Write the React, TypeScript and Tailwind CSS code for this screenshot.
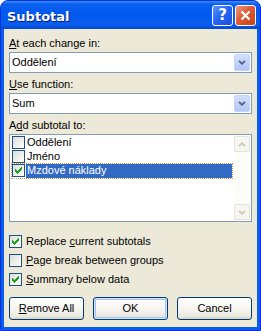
import React from "react";

function Tick() {
  return (
    <svg width="7" height="7" viewBox="0 0 7 7" shapeRendering="crispEdges">
      <path
        d="M6 0h1v1h-1z M5 1h2v1h-2z M0 2h1v1h-1z M4 2h3v1h-3z M0 3h2v1h-2z M3 3h3v1h-3z M0 4h5v1h-5z M1 5h3v1h-3z M2 6h1v1h-1z"
        fill="#21A121"
      />
    </svg>
  );
}

function CheckBox({ checked }: { checked?: boolean }) {
  return (
    <span className="w-[13px] h-[13px] shrink-0 border border-[#1C5180] bg-gradient-to-br from-[#DCDCD7] to-white flex items-center justify-center">
      {checked && <Tick />}
    </span>
  );
}

function Chevron({ color, up }: { color: string; up?: boolean }) {
  return (
    <svg width="8" height="5" viewBox="0 0 8 5">
      <path
        d={up ? "M1 4.2 L4 1.2 L7 4.2" : "M1 0.8 L4 3.8 L7 0.8"}
        stroke={color}
        strokeWidth="1.8"
        fill="none"
      />
    </svg>
  );
}

function Combo({ value }: { value: string }) {
  return (
    <div className="mt-[2px] h-[21px] border border-[#7F9DB9] bg-white flex items-center p-px">
      <span className="flex-1 pl-px">{value}</span>
      <span className="w-[16px] h-full rounded-[2px] border border-[#C3D3FD] bg-gradient-to-b from-[#D4E0FC] to-[#B2C6F4] flex items-center justify-center">
        <Chevron color="#4D6185" />
      </span>
    </div>
  );
}

function Button({ children, isDefault }: { children: React.ReactNode; isDefault?: boolean }) {
  return (
    <div
      className={
        "w-[75px] h-[23px] rounded-[3px] border border-[#003C74] bg-[linear-gradient(180deg,#FFFFFF_0%,#F5F4EF_55%,#EAE8DE_88%,#D6D0C5_100%)] flex items-center justify-center " +
        (isDefault ? "shadow-[inset_0_0_0_1px_#CEE7FF,inset_0_0_0_2px_#A9C0F2]" : "")
      }
    >
      {children}
    </div>
  );
}

const items = [
  { label: "Oddělení", checked: false },
  { label: "Jméno", checked: false },
  { label: "Mzdové náklady", checked: true, selected: true },
];

export default function App() {
  return (
    <div className="w-[261px] h-[331px] flex flex-col rounded-t-[8px] border border-[#0831D9] bg-[#0B5CEA] overflow-hidden font-['Liberation_Sans',Arial,sans-serif] text-[11px] leading-[13px] text-black">
      <div className="h-[28px] shrink-0 flex items-center justify-between pl-[6px] pr-[4px] bg-[linear-gradient(180deg,#3D8FF6_0px,#0A61F0_3px,#0058EE_45%,#0A5DEC_85%,#0447D5_100%)]">
        <span className="pt-[3px] font-['DejaVu_Sans',sans-serif] font-bold text-[13px] leading-[16px] text-white [text-shadow:1px_1px_#0A1883]">
          Subtotal
        </span>
        <div className="flex gap-[2px]">
          <span className="w-[21px] h-[21px] rounded-[3px] border border-white bg-[linear-gradient(135deg,#5B97FB_0%,#2765F3_45%,#1A50DE_100%)] flex items-center justify-center font-['DejaVu_Sans',sans-serif] font-bold text-[15px] leading-none text-white">
            ?
          </span>
          <span className="w-[21px] h-[21px] rounded-[3px] border border-white bg-[linear-gradient(135deg,#EC9A7D_0%,#DE5B35_45%,#C8401A_100%)] flex items-center justify-center">
            <svg width="11" height="11" viewBox="0 0 11 11">
              <path d="M1.5 1.5 L9.5 9.5 M9.5 1.5 L1.5 9.5" stroke="white" strokeWidth="2.2" />
            </svg>
          </span>
        </div>
      </div>

      <div className="flex-1 mx-[3px] mb-[3px] bg-[#ECE9D8] flex flex-col px-[5px] pt-[8px]">
        <div className="h-[13px]">
          <span className="underline underline-offset-[1px]">A</span>t each change in:
        </div>
        <Combo value="Oddělení" />

        <div className="mt-[5px] h-[13px]">
          <span className="underline underline-offset-[1px]">U</span>se function:
        </div>
        <Combo value="Sum" />

        <div className="mt-[5px] h-[13px]">
          A<span className="underline underline-offset-[1px]">d</span>d subtotal to:
        </div>
        <div className="mt-[2px] h-[88px] border border-[#7F9DB9] bg-white flex">
          <div className="flex-1 pt-px px-[2px]">
            {items.map((it) => (
              <div
                key={it.label}
                className={
                  "h-[14px] flex " +
                  (it.selected ? "outline outline-1 outline-dotted outline-[#D09A45]" : "")
                }
              >
                <CheckBox checked={it.checked} />
                <span
                  className={
                    "ml-px flex-1 pl-px " +
                    (it.selected ? "bg-[#316AC5] text-white" : "")
                  }
                >
                  {it.label}
                </span>
              </div>
            ))}
          </div>
          <div className="w-[17px] bg-[#FCFCF9] flex flex-col justify-between py-px pr-px">
            <span className="h-[16px] rounded-[2px] border border-[#E5E3D8] bg-[#F7F6F1] flex items-center justify-center">
              <Chevron color="#CAC8BB" up />
            </span>
            <span className="h-[16px] rounded-[2px] border border-[#E5E3D8] bg-[#F7F6F1] flex items-center justify-center">
              <Chevron color="#CAC8BB" />
            </span>
          </div>
        </div>

        <div className="mt-[13px] flex flex-col gap-[6px]">
          <div className="h-[13px] flex items-center gap-[4px]">
            <CheckBox checked />
            <span>
              Replace <span className="underline underline-offset-[1px]">c</span>urrent subtotals
            </span>
          </div>
          <div className="h-[13px] flex items-center gap-[4px]">
            <CheckBox />
            <span>
              <span className="underline underline-offset-[1px]">P</span>age break between groups
            </span>
          </div>
          <div className="h-[13px] flex items-center gap-[4px]">
            <CheckBox checked />
            <span>
              <span className="underline underline-offset-[1px]">S</span>ummary below data
            </span>
          </div>
        </div>

        <div className="mt-[11px] flex gap-[9px]">
          <Button>
            <span>
              <span className="underline underline-offset-[1px]">R</span>emove All
            </span>
          </Button>
          <Button isDefault>OK</Button>
          <Button>Cancel</Button>
        </div>
      </div>
    </div>
  );
}
